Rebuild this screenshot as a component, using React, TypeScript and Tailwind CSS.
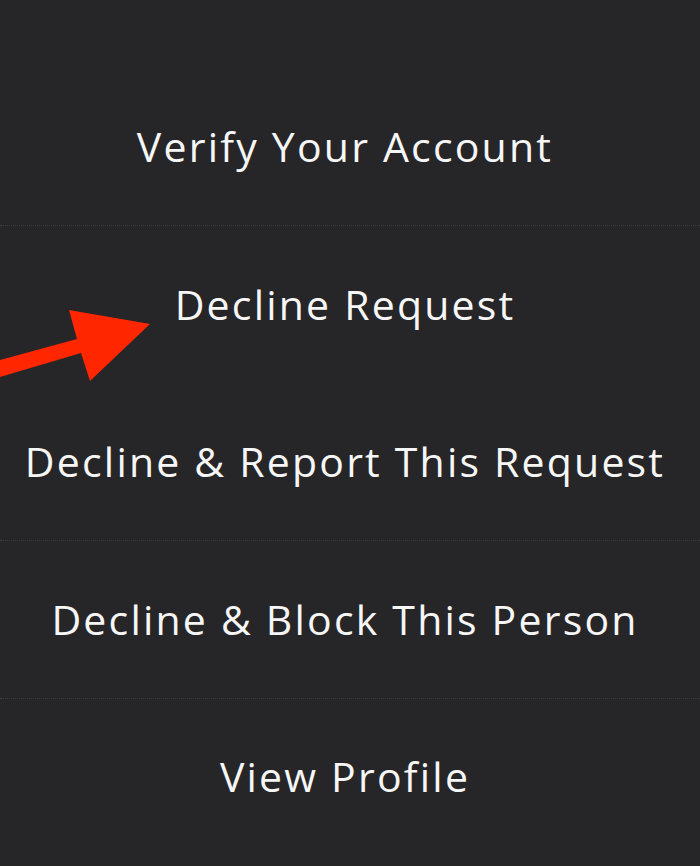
import React from "react";

const rows = [
  { label: "Verify Your Account", sep: true },
  { label: "Decline Request", sep: false },
  { label: "Decline & Report This Request", sep: true },
  { label: "Decline & Block This Person", sep: true },
  { label: "View Profile", sep: false },
];

export default function App() {
  return (
    <div
      className="relative w-[700px] h-[866px] overflow-hidden bg-[#262628] pt-[68.5px]"
      style={{ fontFamily: "'Open Sans', Lato, sans-serif" }}
    >
      <div className="flex flex-col">
        {rows.map((r) => (
          <div
            key={r.label}
            className={
              "h-[157.5px] flex items-center justify-center pr-[10px] text-[41px] tracking-[2.2px] text-[#f6f6f6] " +
              (r.sep ? "border-b border-dotted border-[#3d3d40]" : "border-b border-transparent")
            }
          >
            <span>{r.label}</span>
          </div>
        ))}
      </div>
      <svg
        className="absolute left-0 top-0 pointer-events-none"
        width="700"
        height="866"
        viewBox="0 0 700 866"
      >
        <polygon
          points="0,360 77,339 69,310 150,324 90,381 81,353 0,377"
          fill="#ff2600"
        />
      </svg>
    </div>
  );
}
